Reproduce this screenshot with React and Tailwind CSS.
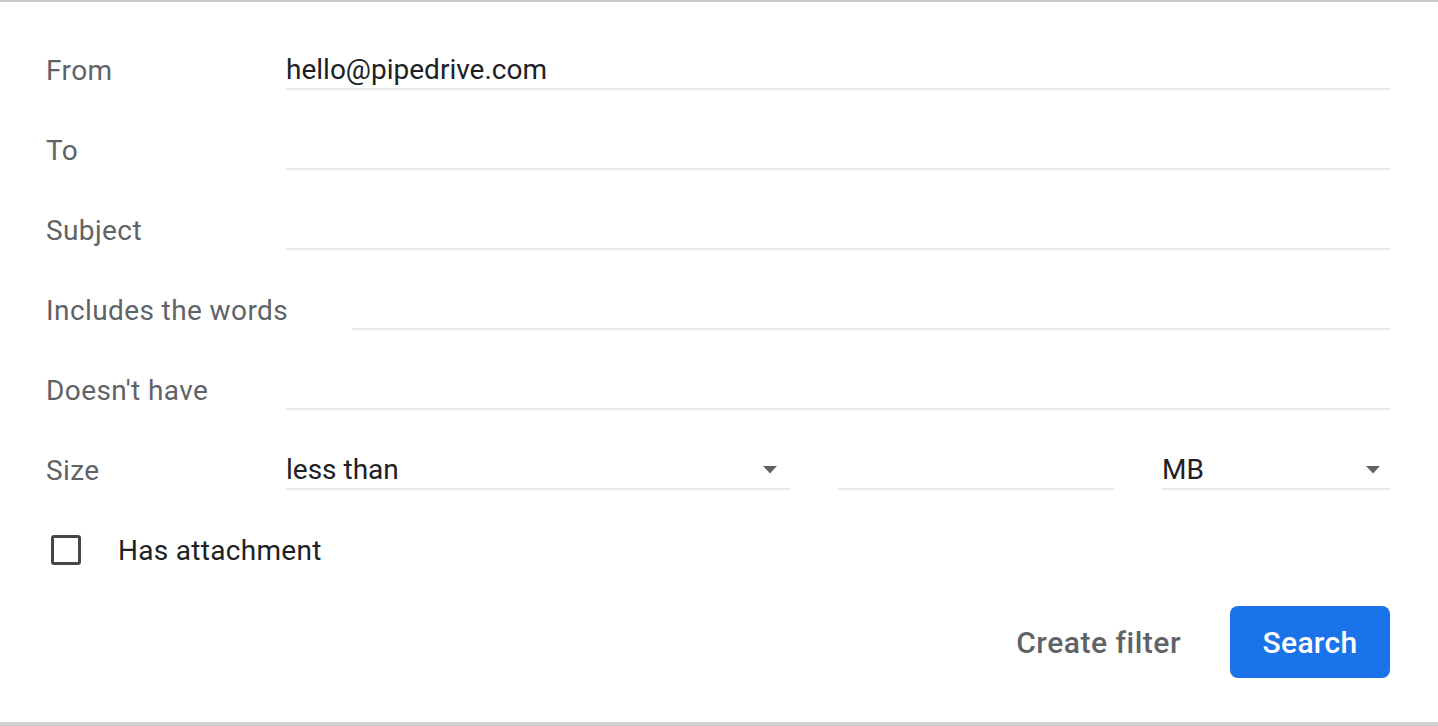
const rows = [
  { label: 'From', value: 'hello@pipedrive.com' },
  { label: 'To', value: '' },
  { label: 'Subject', value: '' },
  { label: 'Includes the words', value: '' },
  { label: "Doesn't have", value: '' },
];

const Arrow = () => (
  <svg width="14" height="8" viewBox="0 0 14 8" className="shrink-0">
    <path d="M0 0h14L7 7.5z" fill="#5f6368" />
  </svg>
);

const Field = ({ value, className = '' }) => (
  <div
    className={`h-[40px] pt-[2px] flex items-center border-b-2 border-[#e8eaed] text-[28px] text-[#202124] ${className}`}
  >
    {value}
  </div>
);

const App = () => {
  return (
    <div
      className="w-[1438px] h-[726px] bg-white border-t-2 border-b-4 border-t-[#c8c8c8] border-b-[#d0d0d0] flex flex-col pl-[46px] pr-[48px] pt-[28px]"
      style={{ fontFamily: 'Roboto, "Liberation Sans", sans-serif' }}
    >
      {rows.map((r) => (
        <div key={r.label} className="h-[80px] flex items-center">
          <div className="min-w-[176px] mr-[64px] pt-[2px] text-[28px] tracking-[0.4px] text-[#5f6368] whitespace-nowrap">
            {r.label}
          </div>
          <Field value={r.value} className="flex-1" />
        </div>
      ))}

      <div className="h-[80px] flex items-center">
        <div className="min-w-[176px] mr-[64px] pt-[2px] text-[28px] tracking-[0.4px] text-[#5f6368]">Size</div>
        <div className="flex-1 flex items-center gap-[48px]">
          <div className="w-[504px] h-[40px] pt-[2px] flex items-center justify-between border-b-2 border-[#e8eaed] text-[28px] text-[#202124] pr-[13px]">
            <span>less than</span>
            <Arrow />
          </div>
          <Field value="" className="w-[276px]" />
          <div className="flex-1 h-[40px] pt-[2px] flex items-center justify-between border-b-2 border-[#e8eaed] text-[28px] text-[#202124] pr-[10px]">
            <span>MB</span>
            <Arrow />
          </div>
        </div>
      </div>

      <div className="h-[80px] flex items-center">
        <div className="ml-[5px] w-[30px] h-[30px] border-[3px] border-[#444746] rounded-[3px]" />
        <span className="ml-[37px] pt-[2px] text-[28px] tracking-[0.3px] text-[#202124]">Has attachment</span>
      </div>

      <div className="mt-[16px] flex items-center justify-end gap-[49px]">
        <button type="button" className="text-[30px] font-medium tracking-[0.5px] text-[#5f6368]">
          Create filter
        </button>
        <button
          type="button"
          className="w-[160px] h-[72px] rounded-[8px] bg-[#1a73e8] text-white text-[30px] font-medium tracking-[0.3px]"
        >
          Search
        </button>
      </div>
    </div>
  );
};

export default App;
